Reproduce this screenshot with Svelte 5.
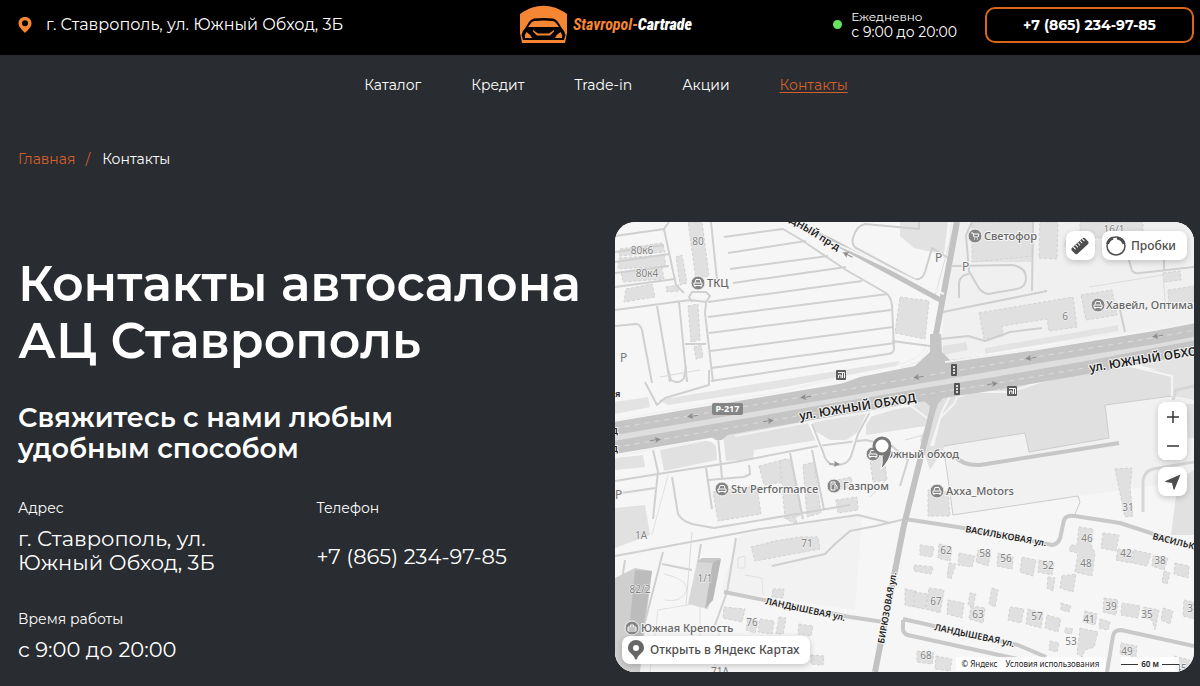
<script>
  const nav = ['Каталог', 'Кредит', 'Trade-in', 'Акции', 'Контакты'];
  const current = 'Контакты';

  // Land parcels, one tone lighter or darker than the base
  const areas = [
    ['#f0f0f0', '950,222 1194,222 1194,325 1000,350 940,364'],
    ['#e2e2e2', '900,222 948,222 944,255 914,248 900,236'],
    ['#e2e2e2', '972,240 1030,246 1032,262 972,262'],
    ['#e0e0e0', '940,390 1000,390 1120,366 1172,372 1172,396 1105,405 1109,438 1029,452 1025,433 945,446 930,470 920,440'],
    ['#e3e3e3', '1120,360 1194,345 1194,400 1172,396 1172,374'],
    ['#f1f1f1', '945,446 1025,433 1029,452 1109,438 1105,405 1172,396 1194,400 1194,480 1080,496 953,515'],
    ['#e1e1e1', '866,418 940,396 932,425 866,435'],
    ['#e1e1e1', '804,425 868,410 858,432 846,440 830,440 820,434'],
    ['#e1e1e1', '723,434 736,430 808,420 818,440 754,450 753,459 726,461'],
    ['#e1e1e1', '660,450 710,440 716,446 717,460 664,471'],
    ['#e3e3e3', '615,402 648,397 650,407 615,414'],
    ['#e2e2e2', '615,458 643,455 645,467 615,470'],
    ['#e1e1e1', '615,508 645,505 650,535 615,548'],
    ['#e4e4e4', '658,400 780,380 900,361 896,366 780,388 668,405'],
    ['#e2e2e2', '943,346 966,342 968,350 943,355'],
    ['#e3e3e3', '985,348 1118,325 1118,331 985,354'],
    ['#f2f2f2', '740,535 862,515 855,610 720,590'],
    ['#e1e1e1', '1178,480 1194,470 1194,535 1171,535'],
    ['#e1e1e1', '1186,404 1194,404 1194,438 1188,438']
  ];

  const buildings = [
    '620,249 662,243 665,252 619,256', '619,258 664,255 666,266 618,269', '621,272 662,268 664,279 623,282',
    '626,289 652,284 655,297 624,302', '688,222 702,222 709,276 696,279', '676,257 682,255 687,283 680,285',
    '666,287 679,285 679,291 667,292', '688,306 698,304 700,340 691,342', '694,347 701,345 703,357 696,359',
    '900,297 929,301 925,339 895,333', '972,222 1033,222 1033,256 972,262', '1040,222 1058,222 1057,259 1039,258',
    '979,313 1073,297 1077,327 1049,331 1047,319 1002,326 1003,336 984,339', '1081,295 1112,290 1117,315 1086,320',
    '1080,222 1143,222 1143,242 1080,236', '1168,290 1194,286 1194,302 1169,306', '1163,273 1180,271 1181,280 1164,282',
    '759,466 786,459 797,524 786,519 784,482 764,485', '780,461 790,459 802,515 785,519', '803,465 814,462 821,513 807,517',
    '713,492 757,486 761,514 718,521', '836,500 857,497 858,510 838,513', '870,460 884,456 887,480 873,482',
    '828,482 851,477 853,487 828,491', '928,490 948,492 950,516 928,516', '1115,469 1132,468 1130,487 1133,516 1125,517',
    '751,547 775,541 800,537 818,537 820,549 755,561', '905,589 916,591 913,607 905,605', '724,607 745,609 742,622 723,618',
    '748,618 758,621 755,633 746,630', '760,619 774,621 772,634 758,632', '779,617 786,618 783,634 776,634',
    '799,624 813,626 811,636 798,634', '811,655 824,656 823,665 811,664', '773,589 784,589 783,598 772,597',
    '920,545 934,547 932,557 920,555', '939,544 952,547 950,561 938,558', '959,553 975,556 972,567 958,565',
    '978,550 991,553 988,566 976,562', '998,553 1013,557 1012,569 997,566', '1022,557 1036,560 1033,576 1020,572',
    '1039,560 1054,563 1052,575 1038,572', '949,563 956,564 951,579 947,577', '914,565 933,567 931,574 914,571',
    '914,592 928,594 925,609 914,607', '929,588 944,590 940,613 926,609', '948,600 964,603 962,618 947,614',
    '971,606 985,608 983,623 969,619', '970,593 976,594 973,607 968,605', '992,588 998,590 995,607 989,604',
    '1010,607 1024,609 1021,623 1008,620', '1028,609 1043,613 1041,628 1026,624', '1047,615 1061,619 1058,632 1045,628',
    '1079,527 1093,529 1091,545 1095,553 1092,576 1075,572 1078,553 1069,551 1071,545 1077,545', '1103,533 1119,535 1116,551 1101,548',
    '1118,549 1133,551 1131,563 1116,560', '1134,550 1151,554 1147,566 1132,563', '1153,556 1168,558 1164,570 1152,566',
    '1164,571 1170,573 1167,584 1162,582', '1175,563 1189,566 1188,578 1174,574', '1062,576 1076,574 1073,592 1060,588',
    '1048,577 1055,578 1053,591 1047,588', '1104,598 1118,600 1116,615 1103,612', '1122,603 1140,606 1138,618 1121,615',
    '1144,607 1159,610 1155,630 1152,620 1142,617', '1163,608 1173,611 1170,624 1161,620', '1085,611 1097,614 1095,625 1083,622',
    '1080,628 1098,632 1094,647 1085,650 1082,657 1077,654', '1065,628 1073,629 1071,634 1065,633', '1100,619 1110,622 1108,630 1099,628',
    '1121,643 1137,646 1136,657 1120,654', '917,651 934,653 932,664 917,662', '936,656 952,659 950,671 935,669',
    '1050,641 1059,643 1057,652 1049,650', '1184,600 1194,602 1194,619 1183,616', '1174,656 1190,660 1188,671 1174,668',
    '1061,603 1071,606 1069,612 1061,610'
  ];

  const roads = [
    ['#d0d0d0', 2, 'M615 236L664 229L669 222M664 229L676 285L684 293M615 252L664 245M615 273L669 266M615 287L675 279M669 254L615 262M615 310L690 300L706 302L710 296L706 292H692L689 297L692 302'],
    ['#d0d0d0', 2, 'M657 306L670 382M679 302L687 382M711 222L717 280M706 303L705 313L713 382M685 344H706M615 326L636 324Q640 324 642 330L652 383'],
    ['#d0d0d0', 2, 'M724 237L783 229L800 239L846 270L886 293Q891 297 892 305L894 349Q894 353 888 354L711 381M728 253L806 241M730 269L828 256M733 283L846 267M708 302L862 281M708 317L888 294M709 333L891 310M710 351L893 327M711 368L895 343'],
    ['#cfcfcf', 2, 'M919 222V229L865 224Q856 226 853 238Q851 246 858 249L914 279Q922 281 925 272L932 248L948 258M892 341L930 346'],
    ['#cfcfcf', 2, 'M952 266L1012 265Q1026 267 1026 278Q1026 287 1017 289L988 294Q981 293 977 285L969 271L966 235L972 222M959 298V283Q960 275 969 274M943 312L1047 291'],
    ['#cfcfcf', 2, 'M1033 222L1032 291M1128 257L1132 271Q1135 274 1140 273L1194 267M1164 240V270M1120 310L1125 332M1042 328L1010 332L985 341L968 336L940 339'],
    ['#dddddd', 1, 'M955 222L934 300M1089 287L1163 275L1166 312M1085 235L1066 240L1064 247'],
    ['#d0d0d0', 2, 'M645 382L657 405L665 398L709 385V370M668 370L671 380Q679 385 684 378L686 367M653 450L658 472L656 490L653 519M615 481L658 474L735 462L818 446L866 440L892 446L908 460L900 486M718 437L722 478M749 465L750 474L744 477L708 480M706 468L712 509M672 477L678 514Q682 521 692 524L714 528L850 505M790 453L803 519M812 450L824 510'],
    ['#d0d0d0', 2, 'M615 494L655 488M615 556L760 529L858 515L890 523M736 538L727 592L715 625M663 552L645 622M772 566L825 554L835 544L850 531L876 526L905 519M662 564L692 570M625 560L622 580M701 544L698 562'],
    ['#e0e0e0', 1, 'M668 475L652 535M664 574Q690 580 686 592Q680 603 665 600M745 575L762 578L763 595M738 558L745 556V568H738ZM704 602L658 610L650 672M700 605V640M720 625L714 672'],
    ['#dadada', 1, 'M692 532L686 605M880 450L886 480L870 497M905 440L924 435M660 377L700 370'],
    ['#f9f9f9', 4, 'M809 420L821 448Q824 462 834 464Q848 465 850 455L856 438L872 411M714 440L700 438L660 446'],
    ['#cfcfcf', 2, 'M812 424L823 452Q826 464 834 465Q849 466 852 453L858 434L870 412'],
    ['#c6c6c6', 4, 'M954 456Q964 466 980 465L1119 443'],
    ['#c9c9c9', 4, 'M905 519L990 532L1052 545Q1060 544 1061 534L1064 520Q1066 515 1075 516L1120 523L1194 547'],
    ['#c9c9c9', 4, 'M724 592L850 617M903 619L1018 645L1046 657M903 620V630Q904 635 912 636L1022 660M850 617L884 622M1107 672L1113 636Q1114 630 1121 630L1194 646'],
    ['#d6d6d6', 3, 'M1143 512V480Q1145 471 1153 469L1194 462M1173 400L1176 390L1194 386'],
    ['#cccccc', 1, 'M944 446L1025 433L1029 452L1109 438L1105 405L1172 396M944 450L953 515L1078 496L1080 502L1075 514'],
    ['#c2c2c2', 5, 'M790 222L830 240L944 302'],
    ['#c2c2c2', 6, 'M957 222L935 340V372M933 408L904 525L875 672'],
    ['#f4f4f4', 2, 'M911 406L927 418M968 392L950 396L942 412L931 446M972 392L957 397L954 404L940 418L933 446M785 222L850 250L944 294M968 392H1010L1040 382L1080 372L1130 366L1172 376V396'],
    ['#ececec', 1, 'M895 366L916 358L928 346M900 368L920 361L930 348M943 358L952 364L985 358']
  ];

  const upper = 'M605 430L700 414L820 394L919 377L1030 358L1158 337L1200 329';
  const lower = 'M605 449L700 433L820 412L940 392L992 384L1090 367L1200 346';

  const numbers = [
    ['80к6', 642, 254], ['80к4', 647, 277], ['80', 698, 245], ['16/1', 1114, 233], ['6', 1065, 320], ['1А', 641, 539],
    ['71', 807, 547], ['1/1', 705, 582], ['82/2', 640, 593], ['76', 752, 626], ['71А', 720, 675], ['62', 946, 554], ['58', 985, 557],
    ['56', 1006, 562], ['52', 1048, 569], ['46', 1087, 542], ['48', 1086, 567], ['42', 1126, 557], ['38', 1160, 564], ['67', 936, 605],
    ['63', 978, 618], ['57', 1037, 620], ['39', 1111, 610], ['35', 1147, 618], ['41', 1089, 623], ['53', 1071, 645], ['31', 1128, 511],
    ['49', 1127, 655], ['68', 926, 659], ['37', 1193, 612], ['45', 1181, 672]
  ];

  const places = [
    ['ТКЦ', 698, 283, 'car', 707], ['Светофор', 975, 236, 'cart', 984], ['Хавейл, Оптима', 1098, 305, 'car', 1106],
    ['Stv Performance', 722, 489, 'car', 731], ['Газпром', 834, 486, 'fuel', 843], ['Южный обход', 873, 454, 'car', 882],
    ['Axxa_Motors', 937, 491, 'car', 946], ['Южная Крепость', 632, 628, 'case', 641]
  ];

  const streets = [
    ['ул. ЮЖНЫЙ ОБХОД', 800, 420, -9, 12], ['ул. ЮЖНЫЙ ОБХОД', 1090, 372, -9, 12], ['ЗАПАДНЫЙ пр-д', 766, 208, 31, 10],
    ['ВАСИЛЬКОВАЯ ул.', 965, 532, 10, 9], ['ВАСИЛЬКОВАЯ ул.', 1152, 539, 14, 9], ['ЛАНДЫШЕВАЯ ул.', 765, 604, 12, 9],
    ['ЛАНДЫШЕВАЯ ул.', 934, 630, 12, 9], ['БИРЮЗОВАЯ ул.', 884, 644, -80, 9], ['я', 615, 397, 0, 9], ['Д', 611, 434, 0, 9], ['Д', 611, 452, 0, 9]
  ];

  const arrows = [[693, 416, 172], [806, 397, 172], [655, 440, -8], [768, 421, -8], [1031, 358, 172], [1158, 336, 172], [919, 377, 172], [992, 384, -8], [848, 255, 207], [834, 464, 0]];
  const lights = [[954, 370], [957, 389]];
  const stops = [[841, 375], [1012, 391]];
</script>

<header class="topbar">
  <address class="place">
    <svg width="14" height="18" viewBox="0 0 14 18" aria-hidden="true">
      <path fill="#f58634" fill-rule="evenodd" d="M7 1C3.200 1 .5 3.700.5 7.300.5 11 4 14 7 17c3-3 6.500-6 6.500-9.700C13.500 3.700 10.800 1 7 1Zm0 3.200a3 3 0 1 1 0 6 3 3 0 0 1 0-6Z" />
    </svg>
    <span>г. Ставрополь, ул. Южный Обход, 3Б</span>
  </address>
  <a class="logo" href="#home">
    <svg width="48" height="39" viewBox="0 0 48 39" aria-hidden="true">
      <path fill="#f58634" d="M0 9C15-2 32-2 47 9V28L45 38H2L0 28Z" />
      <path fill="#020202" d="M14 13.500Q24 12.500 33 13.500Q36 14 38 17L42 23.500Q45 26 45.500 30L44 35H3L1.500 30Q2 26 5 23.500L9 17Q11 14 14 13.500Z" />
      <path fill="#f58634" d="M15 16Q24 15 32 16Q35 16 36 18L39 22H8L11 18Q12 16 15 16ZM6.500 27Q10 29 12 33H5Q4 30 6.500 27ZM40.500 27Q37 29 35 33H42Q43 30 40.500 27ZM13 25L18 28.500H29L34 25V26.500L30 30.500H17L13 26.500Z" />
    </svg>
    <span class="brand">Stavropol-<b>Cartrade</b></span>
  </a>
  <div class="contact">
    <i class="dot"></i>
    <p class="hours"><small>Ежедневно</small><span>с 9:00 до 20:00</span></p>
    <a class="call" href="tel:+78652349785">+7 (865) 234-97-85</a>
  </div>
</header>

<nav class="menu">
  {#each nav as item}
    <a href="#{item}" class:active={item === current}>{item}</a>
  {/each}
</nav>

<nav class="crumbs"><a href="#home">Главная</a><i>/</i><span>Контакты</span></nav>

<main>
  <section class="info">
    <h1>Контакты автосалона<br />АЦ Ставрополь</h1>
    <h2>Свяжитесь с нами любым<br />удобным способом</h2>
    <dl>
      <div><dt>Адрес</dt><dd>г. Ставрополь, ул.<br />Южный Обход, 3Б</dd></div>
      <div><dt>Телефон</dt><dd class="phone"><a href="tel:+78652349785">+7 (865) 234-97-85</a></dd></div>
      <div><dt>Время работы</dt><dd>с 9:00 до 20:00</dd></div>
    </dl>
  </section>

  <section class="map">
    <svg class="canvas" viewBox="615 222 579 450" preserveAspectRatio="xMidYMid slice">
      <rect x="0" y="0" width="1800" height="1200" fill="#f6f6f6" />
      {#each areas as [fill, points]}
        <polygon {fill} {points} />
      {/each}
      {#each buildings as points}
        <polygon class="building" {points} />
      {/each}
      {#each roads as [stroke, width, d]}
        <path class="road" {stroke} stroke-width={width} {d} />
      {/each}

      <g class="tower">
        <path fill="#d8d8d8" d="M697 562L702 558L720 559L708 609L688 604Z" />
        <path fill="#b9b9b9" d="M713 561L721 559L713 600L705 609Z" />
        <path fill="#c7c7c7" d="M697 562L702 558L721 558L713 563Z" />
        <path fill="#cfcfcf" d="M615 578L635 568L652 571L646 620L640 672H615Z" />
        <path fill="#bcbcbc" d="M635 570L652 571L640 650L628 640Z" />
      </g>

      <path class="road" stroke="#dedede" stroke-width="28" d="M605 439L700 423L820 403L940 383L1030 367L1158 346L1200 338" />
      <path class="road" stroke="#c5c5c5" stroke-width="13" d={upper} />
      <path class="road" stroke="#c5c5c5" stroke-width="13" d={lower} />
      <path fill="#c5c5c5" d="M838 385L860 377L915 366L930 352L950 360L1030 350V358L838 392ZM1000 376L1090 362V372L1050 378L1000 390Z" />
      <path class="road" stroke="#f2f2f2" stroke-width="2" d="M605 422L700 405L780 392L838 378M945 362L1030 350L1158 328L1200 321M605 458L700 441M735 436L820 420L915 405" />
      <path class="road" stroke="#dcdcdc" stroke-width="1" stroke-dasharray="5 5" d={upper} />
      <path class="road" stroke="#dcdcdc" stroke-width="1" stroke-dasharray="5 5" d={lower} />
      <path fill="#c5c5c5" d="M930 334H941L942 352L950 360L920 366L930 356ZM918 396L948 392L938 404L934 416H929L930 406ZM706 434L732 431L722 440H716Z" />

      {#each arrows as [x, y, a]}
        <path transform="translate({x} {y}) rotate({a})" fill="#8e8e8e" d="M-5 -.5H1L0 -3L6 0L0 3L1 .5H-5Z" />
      {/each}

      <g class="numbers">
        {#each numbers as [text, x, y]}<text {x} {y}>{text}</text>{/each}
      </g>
      <g class="parking">
        <text x="620" y="362">P</text><text x="935" y="262">P</text><text x="962" y="271">P</text><text x="615" y="499">P</text>
      </g>
      <g class="streets">
        {#each streets as [text, x, y, a, size]}
          <text transform="translate({x} {y}) rotate({a})" font-size={size}>{text}</text>
        {/each}
      </g>

      {#each lights as [x, y]}
        <g transform="translate({x} {y})">
          <rect x="-3" y="-6" width="6" height="12" rx="1" fill="#555" />
          <path fill="#ddd" d="M-1 -4H1V-2H-1ZM-1 -1H1V1H-1ZM-1 2H1V4H-1Z" />
        </g>
      {/each}
      {#each stops as [x, y]}
        <g transform="translate({x} {y})">
          <rect x="-5" y="-5" width="10" height="10" rx="1" fill="#5c5c5c" />
          <path fill="none" stroke="#fff" d="M-3 -2.500H3.500V3M-2.500 3V0H0V3M1.500 -2V3" />
        </g>
      {/each}
      <rect x="712" y="403" width="31" height="12" rx="2" fill="#858585" />
      <text class="shield" x="727.500" y="412">Р-217</text>

      {#each places as [text, x, y, kind, tx]}
        <circle cx={x} cy={y} r="7" fill="#858585" stroke="#f6f6f6" />
        <g transform="translate({x} {y})" fill="none" stroke="#fff">
          {#if kind === 'car'}
            <path d="M-3 -.5L-2 -3.500H2L3 -.5M-4 0H4V2.500H-4ZM-3 2.500V4M3 2.500V4" />
          {:else if kind === 'cart'}
            <path d="M-4 -3H-2L-1 1H3L4 -2H-2M-1 3H0M2 3H3" />
          {:else if kind === 'fuel'}
            <path d="M-3 4V-4H1V4ZM1 -2L3 0V3M-2 -2H0" />
          {:else}
            <path d="M-4 -1H4V3H-4ZM-1.500 -1V-3H1.500V-1M-4 1H4" />
          {/if}
        </g>
        <text class="poi" x={tx} y={y + 4}>{text}</text>
      {/each}

      <g>
        <path fill="#777" stroke="#fff" d="M882 456L892 449Q890 461 881 469Q883 462 882 456Z" />
        <circle cx="882" cy="446" r="8" fill="#fff" stroke="#777" stroke-width="3" />
      </g>
    </svg>

    <div class="tools top">
      <button class="tile" aria-label="Линейка">
        <svg width="18" height="18" viewBox="0 0 18 18"><g transform="rotate(-43 9 9)"><rect x="0" y="5" width="18" height="8" rx="2" fill="#4d4d4d" /><path stroke="#fff" d="M3.500 5V8.500M6.500 5V8.500M9.500 5V8.500M12.500 5V8.500M15.500 5V8.500" /></g></svg>
      </button>
      <button class="traffic">
        <svg width="22" height="22" viewBox="0 0 22 22" fill="none" stroke="#4d4d4d"><circle cx="11" cy="11" r="9" stroke-width="1.500" /><path stroke-width="3" d="M2.500 9A8.500 8.500 0 0 1 8 3M12 3A8 8 0 0 1 19 9" /></svg>
        Пробки
      </button>
    </div>
    <div class="tools side">
      <div class="zoom">
        <button aria-label="Приблизить"><svg width="14" height="14" viewBox="0 0 14 14"><path stroke="#333" stroke-width="1.500" d="M7 1V13M1 7H13" /></svg></button>
        <button aria-label="Отдалить"><svg width="14" height="14" viewBox="0 0 14 14"><path stroke="#333" stroke-width="1.500" d="M1 7H13" /></svg></button>
      </div>
      <button class="tile" aria-label="Моё местоположение">
        <svg width="16" height="16" viewBox="0 0 16 16"><path fill="#4d4d4d" d="M15.500 .5L9.500 15.500Q9 16 8.500 15.500L7 9L.5 8Q0 7.500 .5 7Z" /></svg>
      </button>
    </div>
    <a class="open" href="#map">
      <svg width="18" height="20" viewBox="0 0 18 20"><path fill="#666" fill-rule="evenodd" d="M9 0a8 8 0 0 0-8 8c0 5 6 6 7 11q1 1 2 0c1-5 7-6 7-11a8 8 0 0 0-8-8Zm0 5a3 3 0 1 1 0 6 3 3 0 0 1 0-6Z" /></svg>
      Открыть в Яндекс Картах
    </a>
    <div class="legal">
      <p><span>© Яндекс</span><a href="#terms">Условия использования</a></p>
      <p class="scale">60 м</p>
    </div>
  </section>
</main>

<style>
  :global(body) {
    margin: 0;
    background: #292c30;
    color: #fff;
    font-family: Montserrat, Inter, sans-serif;
    font-size: 14px;
  }
  a { color: inherit; text-decoration: none; }
  p, h1, h2, dl, dd { margin: 0; }
  i, address { font-style: normal; }
  svg { flex: none; }
  button { border: 0; padding: 0; background: #fff; cursor: pointer; }

  .topbar {
    display: grid;
    grid-template-columns: 1fr auto 1fr;
    align-items: center;
    padding: 5px 6px 11px 18px;
    background: #000;
  }
  .place { display: flex; align-items: center; gap: 14px; font-size: 16px; }
  .logo { display: flex; align-items: center; gap: 5px; }
  .brand {
    color: #f58634;
    font: italic 700 16px/20px "Liberation Sans Narrow", "Roboto Condensed", "Open Sans Condensed", Roboto, sans-serif;
  }
  .brand b { color: #fff; }
  .contact { display: flex; align-items: center; justify-content: flex-end; }
  .dot { width: 9px; height: 9px; margin-right: 9px; border-radius: 50%; background: #63e55d; }
  .hours { display: grid; margin-right: 28px; font-size: 14px; line-height: 16px; }
  .hours small { font-size: 12px; line-height: 14px; }
  .call {
    box-sizing: border-box;
    width: 209px;
    border: 2px solid #d9661b;
    border-radius: 10px;
    font-size: 14px;
    font-weight: 700;
    line-height: 32px;
    text-align: center;
  }

  .menu { display: flex; justify-content: center; gap: 50px; padding: 20px 6px 0 18px; line-height: 20px; }
  .menu .active { color: #d4602c; text-decoration: underline; text-underline-offset: 2px; }
  .crumbs { display: flex; padding: 54px 18px 53px; line-height: 20px; }
  .crumbs a, .crumbs i { color: #d4602c; }
  .crumbs i { margin: 0 12px 0 10px; }

  main { display: grid; grid-template-columns: 597fr 579fr; padding: 0 6px 14px 18px; }
  .info { padding-top: 33px; }
  h1 { font-size: 49px; font-weight: 600; line-height: 57px; }
  h2 { margin-top: 33px; font-size: 27px; font-weight: 600; line-height: 31px; }
  dl { display: grid; grid-template-columns: 1fr 1fr; gap: 34px 0; margin-top: 34px; }
  dt { margin-bottom: 9px; font-size: 14px; line-height: 20px; }
  dd { font-size: 21px; line-height: 24px; }
  .phone { padding-top: 18px; }

  .map {
    position: relative;
    height: 450px;
    overflow: hidden;
    border-radius: 20px;
    background: #f6f6f6;
    color: #4d4d4d;
    font-family: "Noto Sans", sans-serif;
  }
  .canvas { display: block; width: 100%; height: 100%; }
  .road { fill: none; stroke-linejoin: round; }
  .building { fill: #e0e0e0; stroke: #d2d2d2; stroke-dasharray: 3 2; }
  .canvas text { paint-order: stroke; stroke: #f6f6f6; stroke-width: 2px; stroke-linejoin: round; }
  .numbers text { fill: #808080; font-size: 10px; text-anchor: middle; }
  .canvas .numbers text { stroke-width: 1px; }
  .parking text { fill: #777; font-size: 12px; }
  .streets text { fill: #222; font-weight: 600; }
  .canvas .shield { fill: #fff; font-size: 9px; font-weight: 700; text-anchor: middle; stroke: none; }
  .canvas .poi { fill: #666; font-size: 11px; font-weight: 500; }

  .tools, .open, .legal { position: absolute; }
  .tools { display: flex; gap: 7px; }
  .tools.top { top: 9px; right: 7px; }
  .tools.side { top: 180px; right: 7px; flex-direction: column; }
  .tile, .traffic, .zoom, .open { border-radius: 8px; background: #fff; box-shadow: 0 2px 6px rgb(0 0 0 / 20%); }
  .tile { display: grid; place-items: center; width: 29px; height: 29px; }
  .traffic {
    display: flex;
    align-items: center;
    gap: 4px;
    padding: 0 11px 0 3px;
    color: #4d4d4d;
    font: 500 12px/29px "Noto Sans", sans-serif;
  }
  .zoom { display: grid; overflow: hidden; }
  .zoom button { display: grid; place-items: center; width: 29px; height: 29px; }
  .open {
    left: 7px;
    bottom: 8px;
    display: flex;
    align-items: center;
    gap: 5px;
    padding: 0 11px 0 5px;
    font-size: 12px;
    font-weight: 500;
    line-height: 28px;
  }
  .legal { right: 15px; bottom: 1px; display: flex; gap: 16px; color: #222; font-size: 8px; line-height: 14px; }
  .legal p { display: flex; gap: 8px; padding: 0 6px; background: rgb(255 255 255 / 85%); }
  .legal .scale { align-items: center; gap: 3px; padding: 0; font-weight: 600; }
  .scale::before, .scale::after { content: ""; width: 17px; height: 1px; background: #333; }
</style>
